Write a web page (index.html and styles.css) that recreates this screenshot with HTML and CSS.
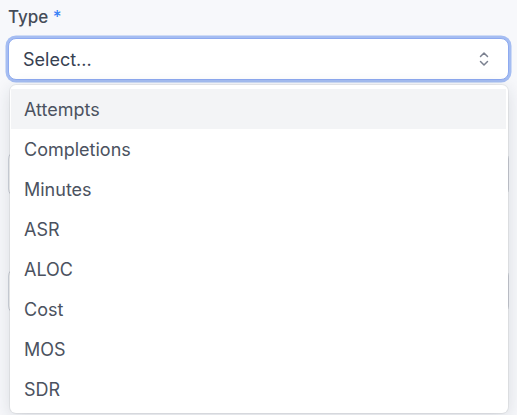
FILE: index.html
```html
<!DOCTYPE html>
<html>
<head>
<meta charset="utf-8">
<link rel="stylesheet" href="styles.css">
</head>
<body>
<form class="form">
  <div class="field">
    <label class="label">Type <span class="req">*</span></label>
    <div class="select-wrap">
      <div class="select">
        <span class="select-text">Select...</span>
        <svg class="chev" width="12" height="18" viewBox="0 0 12 18" fill="none" stroke="#7b8190" stroke-width="1.5" stroke-linecap="round" stroke-linejoin="round">
          <polyline points="2.5,6.5 6,3 9.5,6.5"/>
          <polyline points="2.5,11.5 6,15 9.5,11.5"/>
        </svg>
      </div>
      <ul class="menu">
        <li class="opt active">Attempts</li>
        <li class="opt">Completions</li>
        <li class="opt">Minutes</li>
        <li class="opt">ASR</li>
        <li class="opt">ALOC</li>
        <li class="opt">Cost</li>
        <li class="opt">MOS</li>
        <li class="opt">SDR</li>
      </ul>
    </div>
  </div>
  <div class="input"></div>
  <div class="input"></div>
</form>
</body>
</html>
```
FILE: styles.css
```css
* { box-sizing: border-box; }
html { overflow: hidden; height: 100%; background: #f7f8fb; }
body {
  margin: 0;
  padding: 0;
  min-height: 100%;
  background: #f7f8fb;
  font-family: Inter, "Noto Sans", sans-serif;
  color: #374151;
}
.form {
  padding: 5px 8px 0 8px;
  display: flex;
  flex-direction: column;
  gap: 71px;
}
.field { display: flex; flex-direction: column; gap: 9px; }
.label {
  font-size: 17px;
  line-height: 24px;
  font-weight: 500;
  color: #454c58;
}
.req { color: #3b82f6; }
.select-wrap { position: relative; }
.select {
  height: 42px;
  border: 1px solid #8eaaf0;
  box-shadow: 0 0 0 2.5px #a5bdf2;
  border-radius: 8px;
  background: #fff;
  display: flex;
  align-items: center;
  justify-content: space-between;
  padding: 0 18px 0 14px;
}
.select-text { font-size: 18px; color: #374151; }
.chev { display: block; }
.menu {
  position: absolute;
  left: 2px;
  right: 1px;
  top: 47px;
  margin: 0;
  padding: 4px 2px 4px 1px;
  list-style: none;
  background: #fff;
  border-radius: 6px;
  box-shadow: 0 0 0 1px rgba(0,0,0,0.05), 0 4px 18px rgba(30,40,60,0.14);
  z-index: 5;
}
.opt {
  height: 40px;
  display: flex;
  align-items: center;
  padding-left: 13px;
  font-size: 18px;
  color: #4b5260;
}
.opt.active { background: #f3f4f6; }
.input {
  height: 46px;
  border: 1px solid #cfd3da;
  border-radius: 8px;
  background: #fff;
}
```
